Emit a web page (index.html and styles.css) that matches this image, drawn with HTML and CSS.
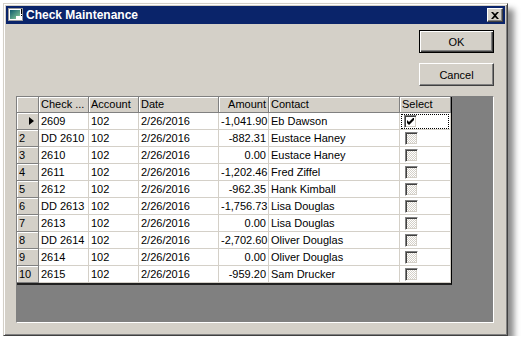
FILE: index.html
```html
<!DOCTYPE html>
<html>
<head>
  <meta charset="UTF-8">
  <title>Check Maintenance</title>
  <link rel="stylesheet" href="styles.css">
</head>
<body>
  <div class="window">
    <div class="titlebar">
      <svg class="app-icon" width="16" height="14" viewBox="0 0 16 14">
        <defs>
          <linearGradient id="ig" x1="0" y1="0" x2="1" y2="1">
            <stop offset="0" stop-color="#0e5a6e"/>
            <stop offset="1" stop-color="#8fd29a"/>
          </linearGradient>
        </defs>
        <rect x="0.5" y="0.5" width="14" height="12" fill="#fff" stroke="#9a9a9a"/>
        <rect x="2" y="2" width="10" height="9" fill="url(#ig)"/>
        <rect x="8" y="8" width="5" height="4" fill="#fff"/>
        <rect x="13" y="1" width="1" height="5" fill="#000"/>
        <rect x="13" y="7" width="1" height="1" fill="#000"/>
      </svg>
      <span class="title">Check Maintenance</span>
      <button class="close-btn" type="button">
        <svg width="8" height="7" viewBox="0 0 8 7">
          <path d="M0 0h2l2 2 2-2h2L5 3.5 8 7H6L4 5 2 7H0l3-3.5z" fill="#000"/>
        </svg>
      </button>
    </div>
    <div class="client">
      <div class="actions">
        <button class="btn btn-default" type="button">OK</button>
        <button class="btn" type="button">Cancel</button>
      </div>
      <div class="grid-area">
        <div class="grid">
          <div class="hd corner"></div>
          <div class="hd">Check ...</div>
          <div class="hd">Account</div>
          <div class="hd">Date</div>
          <div class="hd num">Amount</div>
          <div class="hd">Contact</div>
          <div class="hd last">Select</div>

          <div class="rh"><span class="arrow"></span></div>
          <div class="c">2609</div><div class="c">102</div><div class="c">2/26/2016</div><div class="c num">-1,041.90</div><div class="c">Eb Dawson</div>
          <div class="c last"><div class="focus"><span class="chk on"><svg width="7" height="7" viewBox="0 0 7 7"><path d="M0 2v3l2 2 5-5V-1L2 4z" fill="#000"/></svg></span></div></div>

          <div class="rh">2</div>
          <div class="c">DD 2610</div><div class="c">102</div><div class="c">2/26/2016</div><div class="c num">-882.31</div><div class="c">Eustace Haney</div><div class="c last"><span class="chk"></span></div>

          <div class="rh">3</div>
          <div class="c">2610</div><div class="c">102</div><div class="c">2/26/2016</div><div class="c num">0.00</div><div class="c">Eustace Haney</div><div class="c last"><span class="chk"></span></div>

          <div class="rh">4</div>
          <div class="c">2611</div><div class="c">102</div><div class="c">2/26/2016</div><div class="c num">-1,202.46</div><div class="c">Fred Ziffel</div><div class="c last"><span class="chk"></span></div>

          <div class="rh">5</div>
          <div class="c">2612</div><div class="c">102</div><div class="c">2/26/2016</div><div class="c num">-962.35</div><div class="c">Hank Kimball</div><div class="c last"><span class="chk"></span></div>

          <div class="rh">6</div>
          <div class="c">DD 2613</div><div class="c">102</div><div class="c">2/26/2016</div><div class="c num">-1,756.73</div><div class="c">Lisa Douglas</div><div class="c last"><span class="chk"></span></div>

          <div class="rh">7</div>
          <div class="c">2613</div><div class="c">102</div><div class="c">2/26/2016</div><div class="c num">0.00</div><div class="c">Lisa Douglas</div><div class="c last"><span class="chk"></span></div>

          <div class="rh">8</div>
          <div class="c">DD 2614</div><div class="c">102</div><div class="c">2/26/2016</div><div class="c num">-2,702.60</div><div class="c">Oliver Douglas</div><div class="c last"><span class="chk"></span></div>

          <div class="rh">9</div>
          <div class="c">2614</div><div class="c">102</div><div class="c">2/26/2016</div><div class="c num">0.00</div><div class="c">Oliver Douglas</div><div class="c last"><span class="chk"></span></div>

          <div class="rh">10</div>
          <div class="c">2615</div><div class="c">102</div><div class="c">2/26/2016</div><div class="c num">-959.20</div><div class="c">Sam Drucker</div><div class="c last"><span class="chk"></span></div>
        </div>
      </div>
    </div>
  </div>
</body>
</html>
```

FILE: styles.css
```css
body {
  margin: 0;
  background-color: #fff;
  font-family: "Liberation Sans", Arial, sans-serif;
  font-size: 11px;
  color: #000;
}

.window {
  box-sizing: border-box;
  width: 505px;
  height: 333px;
  margin: 3px 0 0 3px;
  padding: 2px;
  background-color: #d4d0c8;
  border: 1px solid;
  border-color: #d4d0c8 #404040 #404040 #d4d0c8;
  box-shadow: inset 1px 1px #fff, inset -1px -1px #808080, 6px 6px 6px rgba(0, 0, 0, 0.45);
}

.titlebar {
  display: flex;
  align-items: center;
  height: 18px;
  padding: 0 2px;
  background-color: #0a246a;
}

.app-icon {
  margin-right: 2px;
}

.title {
  flex: 1;
  color: #fff;
  font-weight: bold;
  font-size: 12px;
}

.close-btn {
  box-sizing: border-box;
  display: flex;
  align-items: center;
  justify-content: center;
  width: 16px;
  height: 14px;
  padding: 0;
  background-color: #d4d0c8;
  border: 1px solid;
  border-color: #fff #404040 #404040 #fff;
  box-shadow: inset -1px -1px #808080;
}

.client {
  display: flex;
  flex-direction: column;
  padding: 6px 11px 0 10px;
}

.actions {
  display: flex;
  flex-direction: column;
  align-items: flex-end;
  gap: 10px;
  margin-bottom: 10px;
}

.btn {
  box-sizing: border-box;
  width: 75px;
  height: 23px;
  padding: 0;
  font-family: "Liberation Sans", Arial, sans-serif;
  font-size: 11px;
  color: #000;
  background-color: #d4d0c8;
  border: 1px solid;
  border-color: #fff #404040 #404040 #fff;
  box-shadow: inset -1px -1px #808080;
}

.btn-default {
  border-color: #000;
  box-shadow: inset 1px 1px #fff, inset -1px -1px #404040, inset -2px -2px #808080;
}

.grid-area {
  box-sizing: border-box;
  height: 227px;
  background-color: #808080;
  border: 1px solid;
  border-color: #808080 #fff #fff #808080;
}

.grid {
  display: grid;
  grid-template-columns: 22px 50px 50px 80px 50px 131px 51px;
  grid-template-rows: 16px;
  grid-auto-rows: 17px;
  width: 434px;
  border-right: 1px solid #000;
  border-bottom: 2px solid #202020;
  background-color: #fff;
}

.hd,
.rh {
  box-sizing: border-box;
  padding-left: 2px;
  line-height: 15px;
  white-space: nowrap;
  overflow: hidden;
  background-color: #d4d0c8;
  border-right: 1px solid #808080;
  border-bottom: 1px solid #808080;
  box-shadow: inset 1px 1px #fff;
}

.rh {
  line-height: 16px;
}

.hd.num {
  text-align: right;
  padding-right: 2px;
}

.c {
  box-sizing: border-box;
  padding-left: 2px;
  line-height: 16px;
  white-space: nowrap;
  overflow: hidden;
  border-right: 1px solid #d4d0c8;
  border-bottom: 1px solid #d4d0c8;
}

.c.num {
  text-align: right;
  padding-right: 2px;
}

.c.last {
  display: flex;
  align-items: center;
  padding-left: 5px;
}

.arrow {
  display: inline-block;
  margin: 4px 0 0 10px;
  width: 0;
  height: 0;
  border-left: 5px solid #000;
  border-top: 4px solid transparent;
  border-bottom: 4px solid transparent;
  vertical-align: top;
}

.focus {
  box-sizing: border-box;
  display: flex;
  align-items: center;
  height: 15px;
  width: 48px;
  margin-left: -4px;
  padding-left: 3px;
  outline: 1px dotted #000;
  outline-offset: -1px;
}

.chk {
  box-sizing: border-box;
  display: flex;
  align-items: center;
  justify-content: center;
  width: 13px;
  height: 13px;
  border: 1px solid;
  border-color: #808080 #fff #fff #808080;
  box-shadow: inset 1px 1px #404040, inset -1px -1px #d4d0c8;
  background: repeating-conic-gradient(#d4d0c8 0 25%, #fff 0 50%) 0 0 / 2px 2px;
}

.chk.on {
  background: #fff;
}
```
